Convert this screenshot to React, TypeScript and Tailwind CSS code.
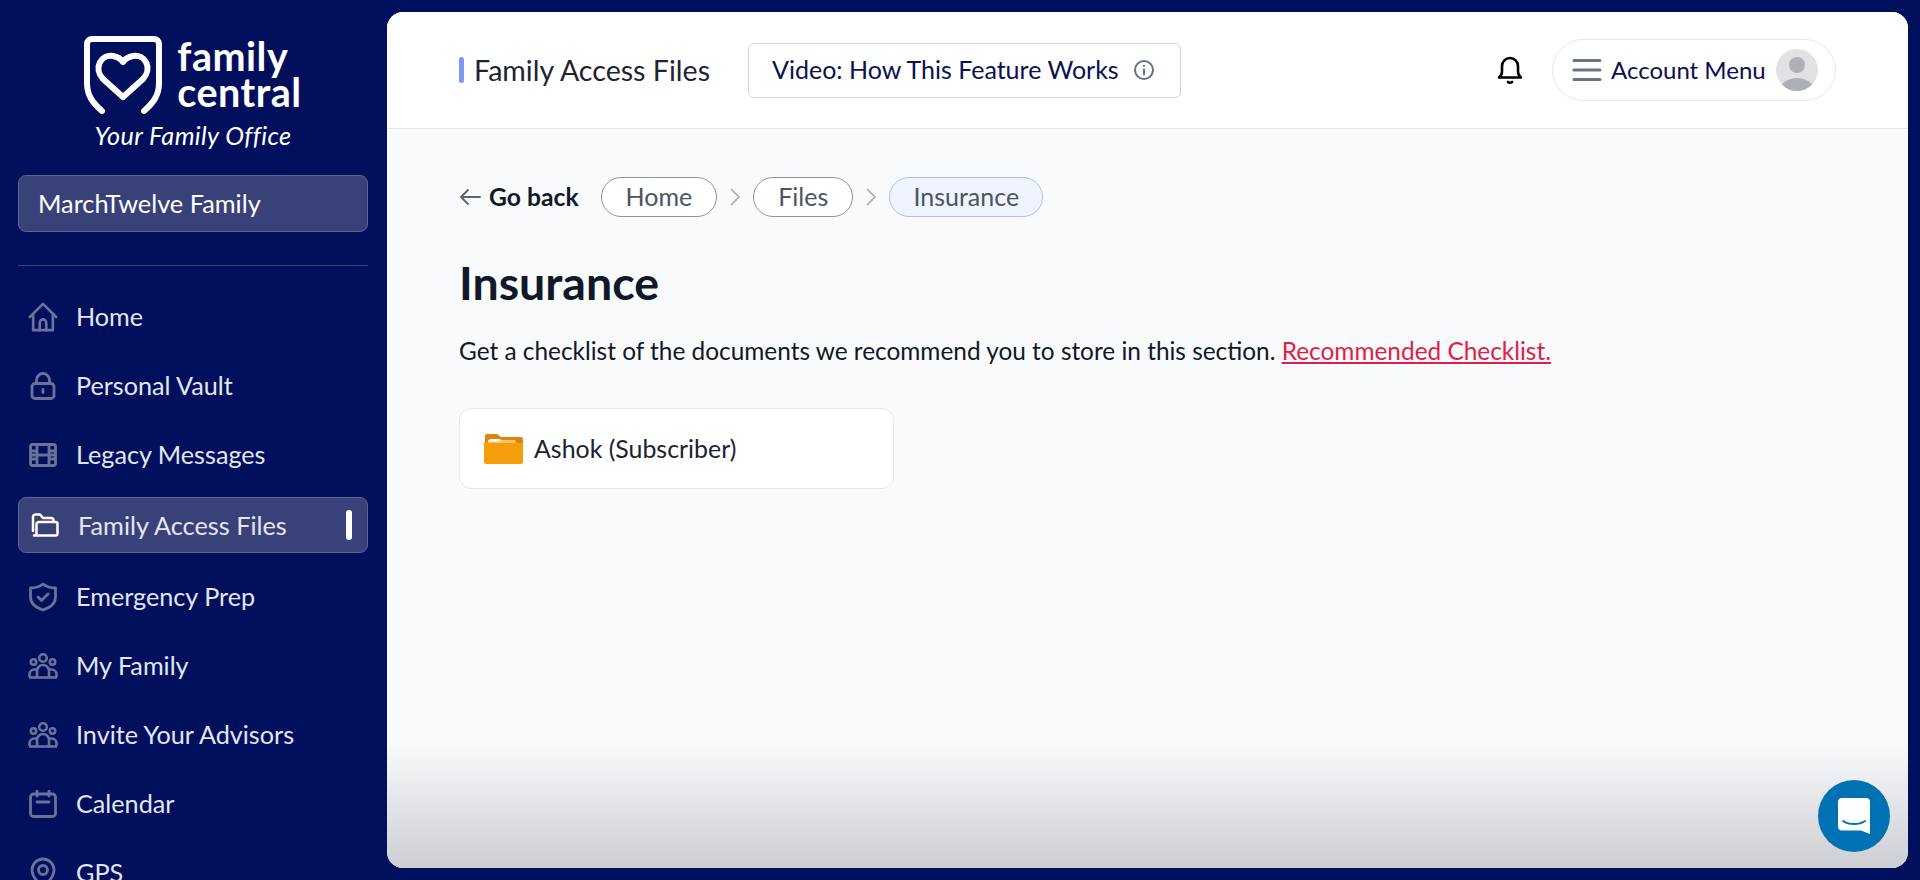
import React from 'react';

const FONT = "font-['Lato','Noto_Sans',sans-serif]";

const HomeIcon = () => (
  <svg width="32" height="32" viewBox="0 0 32 32" fill="none" stroke="currentColor" strokeWidth="2.800" strokeLinejoin="round" strokeLinecap="round">
    <path d="M2 16 16 2l14 14" />
    <path d="M5.500 13v17h21V13" />
    <path d="M12.500 30v-8a3.500 3.500 0 0 1 7 0v8" />
  </svg>
);
const LockIcon = () => (
  <svg width="26" height="28" viewBox="0 0 26 28" fill="none" stroke="currentColor" strokeWidth="2.800" strokeLinecap="round">
    <rect x="2" y="11.500" width="22" height="15" rx="3" />
    <path d="M6.500 11.500V8a6.500 6.500 0 0 1 13 0v3.500" />
    <path d="M13 17.500v3" />
  </svg>
);
const FilmIcon = () => (
  <svg width="28" height="24" viewBox="0 0 28 24" fill="none" stroke="currentColor" strokeWidth="2.800">
    <rect x="1.500" y="1.500" width="25" height="21" rx="2" />
    <path d="M8 1.500v21M20 1.500v21M1.500 8H8M1.500 12h25M1.500 16H8M20 8h6.500M20 16h6.500" />
  </svg>
);
const OpenFolderIcon = () => (
  <svg width="28" height="24" viewBox="0 0 28 24" fill="none" stroke="#fff" strokeWidth="2.500" strokeLinejoin="round" strokeLinecap="round">
    <path d="M2 18V4a2.500 2.500 0 0 1 2.500-2.500h4.500l3 3.500h8a2.500 2.500 0 0 1 2.500 2.500" />
    <path d="M6 22.500h18.500a2 2 0 0 0 2-2V11a2 2 0 0 0-2-2H8a2.500 2.500 0 0 0-2.500 2.500v9a2.500 2.500 0 0 1-2.500 2H6" />
  </svg>
);
const ShieldIcon = () => (
  <svg width="30" height="30" viewBox="0 0 30 30" fill="none" stroke="currentColor" strokeWidth="2.800" strokeLinecap="round" strokeLinejoin="round">
    <path d="M15 2c3 2.500 7 4 12.500 4v9c0 6.500-5 10.500-12.500 13C7.500 25.500 2.500 21.500 2.500 15V6C8 6 12 4.500 15 2Z" />
    <path d="m10 15 3.500 3.500 6.500-6.500" />
  </svg>
);
const PeopleIcon = () => (
  <svg width="30" height="26" viewBox="0 0 30 26" fill="none" stroke="currentColor" strokeWidth="2.600" strokeLinejoin="round">
    <circle cx="15" cy="5" r="3.800" />
    <circle cx="5.500" cy="9" r="2.700" />
    <circle cx="24.500" cy="9" r="2.700" />
    <path d="M9 24v-6a6 6 0 0 1 12 0v6" />
    <path d="M1.500 24v-2.500A5 5 0 0 1 6 16.500h3M28.500 24v-2.500a5 5 0 0 0-4.500-5h-3" />
    <path d="M1 24.500h28" />
  </svg>
);
const CalendarIcon = () => (
  <svg width="28" height="28" viewBox="0 0 28 28" fill="none" stroke="currentColor" strokeWidth="2.800" strokeLinecap="round">
    <rect x="1.500" y="4" width="25" height="22.500" rx="3" />
    <path d="M8 1v5M20 1v5M8 12h12" />
  </svg>
);
const PinIcon = () => (
  <svg width="26" height="32" viewBox="0 0 26 32" fill="none" stroke="currentColor" strokeWidth="2.800">
    <path d="M13 30C6 24 2 18.500 2 13a11 11 0 0 1 22 0c0 5.500-4 11-11 17Z" />
    <circle cx="13" cy="13" r="4.500" />
  </svg>
);

const NavItem = ({ icon, label }: { icon: React.ReactNode; label: string }) => (
  <div className="flex h-[69px] shrink-0 items-center pl-[10px] text-[#e3e6f2]">
    <span className="flex w-[30px] justify-center text-[#6a7299]">{icon}</span>
    <span className="ml-[18px] text-[25.200px] leading-none">{label}</span>
  </div>
);

const Sidebar = () => (
  <aside className="flex h-[880px] w-[387px] shrink-0 flex-col overflow-hidden pl-[18px] pr-[19px] pt-[36px]">
    <div className="flex flex-col items-center text-white">
      <div className="flex items-start">
        <svg width="78" height="78" viewBox="0 0 78 78" fill="none" stroke="#fff" strokeWidth="6" strokeLinecap="round" strokeLinejoin="round">
          <path d="M18 75C9 67 3 60 3 47V8a5 5 0 0 1 5-5h62a5 5 0 0 1 5 5v39c0 13-6 20-15 28" />
          <path d="M39 61 19 43C9 32 17 18 29 20c4 .700 8 3 10 6 2-3 6-5.300 10-6 12-2 20 12 10 23Z" />
        </svg>
        <div className="ml-[15px] mt-[2px] flex flex-col text-[39.500px] font-bold leading-[36px] tracking-[0.5px]">
          <span>family</span>
          <span>central</span>
        </div>
      </div>
      <span className="mt-[5px] text-[25.200px] italic leading-[32px] tracking-[0.4px]">Your Family Office</span>
    </div>

    <div className="mt-[24px] flex h-[57px] shrink-0 items-center rounded-lg border-[1.500px] border-[#5d668f] bg-[#384279] pl-[19px] text-[25.300px] text-white">
      MarchTwelve Family
    </div>
    <div className="mt-[33px] h-px shrink-0 bg-[#373f75]" />

    <div className="mt-[16px] flex flex-col">
      <NavItem icon={<HomeIcon />} label="Home" />
      <NavItem icon={<LockIcon />} label="Personal Vault" />
      <NavItem icon={<FilmIcon />} label="Legacy Messages" />
      <div className="mb-[9px] mt-[8px] flex h-[56px] shrink-0 items-center rounded-lg border-[1.500px] border-[#5d668f] bg-[#384279] pl-[11px] pr-[15px] text-[#e3e6f2]">
        <span className="flex w-[30px] justify-center"><OpenFolderIcon /></span>
        <span className="ml-[18px] flex-1 pt-[2px] text-[25.300px] leading-none">Family Access Files</span>
        <span className="h-[30px] w-[6px] rounded-full bg-white" />
      </div>
      <NavItem icon={<ShieldIcon />} label="Emergency Prep" />
      <NavItem icon={<PeopleIcon />} label="My Family" />
      <NavItem icon={<PeopleIcon />} label="Invite Your Advisors" />
      <NavItem icon={<CalendarIcon />} label="Calendar" />
      <NavItem icon={<PinIcon />} label="GPS" />
    </div>
  </aside>
);

const Chevron = () => (
  <svg width="12" height="20" viewBox="0 0 12 20" fill="none" stroke="#a4a9b4" strokeWidth="1.500" className="mx-[12px]">
    <path d="m2 2 8 8-8 8" />
  </svg>
);

const Header = () => (
  <header className="flex h-[117px] shrink-0 items-center border-b border-[#e2e7f0] bg-white pl-[72px] pr-[72px]">
    <span className="h-[26px] w-[5px] rounded-sm bg-[#7d97f7]" />
    <span className="ml-[10px] w-[236px] whitespace-nowrap text-[28.600px] text-[#1e2433]">Family Access Files</span>
    <div className="ml-[38px] flex h-[55px] w-[433px] items-center rounded-md border border-[#cfd6e2] pl-[23px] text-[25px] text-[#0b1150]">
      Video: How This Feature Works
      <svg width="22" height="22" viewBox="0 0 22 22" fill="none" stroke="#667085" strokeWidth="2" strokeLinecap="round" className="ml-[14px]">
        <circle cx="11" cy="11" r="9" />
        <path d="M11 10.500v5M11 6.800v.2" />
      </svg>
    </div>
    <div className="ml-auto flex items-center">
      <svg width="28" height="30" viewBox="0 0 28 30" fill="none" stroke="#000" strokeWidth="2.600" strokeLinecap="round" strokeLinejoin="round">
        <path d="M3 22.500c2-1.500 3-3.500 3-6V11a8 8 0 0 1 16 0v5.500c0 2.500 1 4.500 3 6Z" />
        <path d="M12 27c1 1 3 1 4 0" />
      </svg>
      <div className="ml-[28px] flex h-[62px] w-[284px] items-center rounded-full border border-[#e2e7f0] pl-[19px]">
        <svg width="30" height="24" viewBox="0 0 30 24" fill="none" stroke="#6b7483" strokeWidth="3" strokeLinecap="round">
          <path d="M2 2.500h26M2 12h26M2 21.500h26" />
        </svg>
        <span className="ml-[9px] text-[24px] text-[#0b1150]">Account Menu</span>
        <svg width="42" height="42" viewBox="0 0 42 42" className="ml-auto mr-[17px]">
          <defs>
            <clipPath id="avatar-clip"><circle cx="21" cy="21" r="21" /></clipPath>
          </defs>
          <g clipPath="url(#avatar-clip)">
            <rect width="42" height="42" fill="#e0e2e4" />
            <circle cx="21" cy="16" r="8" fill="#adb1b5" />
            <ellipse cx="21" cy="41" rx="17" ry="12" fill="#adb1b5" />
          </g>
        </svg>
      </div>
    </div>
  </header>
);

const Crumb = ({ label, active }: { label: string; active?: boolean }) => (
  <span
    className={
      active
        ? 'flex h-[40px] w-[154px] items-center justify-center rounded-full border border-[#a9c1fb] bg-[#eff4ff] text-[25px] text-[#4b5563]'
        : 'flex h-[40px] items-center justify-center rounded-full border border-[#8e939c] bg-white px-[24px] text-[25px] text-[#4b5563]'
    }
  >
    {label}
  </span>
);

const Content = () => (
  <main className="flex-1 pl-[72px] pt-[48px]">
    <div className="flex h-[40px] items-center">
      <svg width="22" height="18" viewBox="0 0 22 18" fill="none" stroke="#5b6472" strokeWidth="1.800" strokeLinecap="round" strokeLinejoin="round">
        <path d="M21 9H2M9 2 2 9l7 7" />
      </svg>
      <span className="ml-[8px] text-[24.700px] font-bold text-[#111827]">Go back</span>
      <span className="ml-[22px] flex items-center">
        <Crumb label="Home" />
        <Chevron />
        <Crumb label="Files" />
        <Chevron />
        <Crumb label="Insurance" active />
      </span>
    </div>
    <h1 className="mt-[37px] text-[46.500px] font-bold leading-[56px] text-[#111827]">Insurance</h1>
    <p className="mt-[25px] text-[24.400px] leading-[32px] text-[#111827]">
      Get a checklist of the documents we recommend you to store in this section.{' '}
      <span className="text-[#e11d48] underline">Recommended Checklist.</span>
    </p>
    <div className="mt-[41px] flex h-[81px] w-[435px] items-center rounded-xl border border-[#e5e8ef] bg-white pl-[24px]">
      <svg width="39" height="30" viewBox="0 0 39 30">
        <path d="M1 2a2 2 0 0 1 2-2h10l4 3h20a2 2 0 0 1 2 2v8H1Z" fill="#df8408" />
        <path d="M4 8c0-2 1-3 3-3h8l3 1h13l1 3H4Z" fill="#fff" />
        <path d="M0 9h39v19a2 2 0 0 1-2 2H2a2 2 0 0 1-2-2Z" fill="#f59e0b" />
        <path d="M0 8c2-.500 12-.500 14-.500l3-1.500H32l1 3H0Z" fill="#f59e0b" opacity="0.600" />
      </svg>
      <span className="ml-[11px] text-[24.900px] text-[#1a2233]">Ashok (Subscriber)</span>
    </div>
  </main>
);

const App: React.FC = () => {
  return (
    <div className={`flex h-[880px] w-full overflow-hidden bg-[#010f5c] ${FONT}`}>
      <Sidebar />
      <div className="relative my-[12px] mr-[12px] flex min-w-0 flex-1 flex-col overflow-hidden rounded-2xl bg-[#f8fafc]">
        <Header />
        <Content />
        {/* fade at the bottom of the panel */}
        <div className="absolute inset-x-0 bottom-0 h-[125px] bg-gradient-to-b from-[#f8fafc00] to-[#cdced3]" />
        <div className="absolute bottom-[16px] right-[18px] flex h-[72px] w-[72px] items-center justify-center rounded-full bg-[#0071b2]">
          <svg width="32" height="36" viewBox="0 0 32 36">
            <path d="M4 0h24a4 4 0 0 1 4 4v32l-9-3.500H4a4 4 0 0 1-4-4V4a4 4 0 0 1 4-4Z" fill="#fff" />
            <path d="M5 23c6 4 16 4 22 0" fill="none" stroke="#0071b2" strokeWidth="2" strokeLinecap="round" />
          </svg>
        </div>
      </div>
    </div>
  );
};

export default App;
